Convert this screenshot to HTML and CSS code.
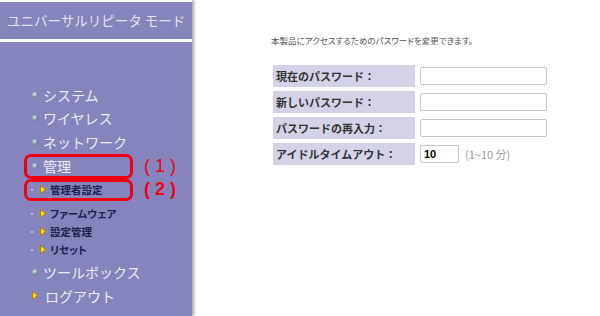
FILE: index.html
```html
<!doctype html>
<html lang="ja">
<head>
    <meta charset="UTF-8">
    <meta name="viewport" content="width=device-width, initial-scale=1.0">
    <title>管理者設定</title>
    <link rel="stylesheet" href="styles.css">
</head>
<body>
<div class="page">
    <aside class="sidebar">
        <div class="mode-title">ユニバーサルリピータ モード</div>
        <ul class="menu">
            <li class="menu-row main"><span class="item"><i class="dot"></i>システム</span></li>
            <li class="menu-row main"><span class="item"><i class="dot"></i>ワイヤレス</span></li>
            <li class="menu-row main"><span class="item"><i class="dot"></i>ネットワーク</span></li>
            <li class="menu-row main boxed"><span class="item marked"><i class="dot"></i>管理</span><span class="note">(1)</span></li>
            <li class="menu-row sub boxed"><span class="item marked"><i class="tiny"></i><svg class="arrow" viewBox="0 0 6 9"><polygon points="0.5,0.5 5.5,4.5 0.5,8.5" fill="#ffe400" stroke="#b07a00" stroke-width="1"/></svg>管理者設定</span><span class="note">(2)</span></li>
            <li class="menu-row sub first-sub"><span class="item"><i class="tiny"></i><svg class="arrow" viewBox="0 0 6 9"><polygon points="0.5,0.5 5.5,4.5 0.5,8.5" fill="#ffe400" stroke="#b07a00" stroke-width="1"/></svg>ファームウェア</span></li>
            <li class="menu-row sub"><span class="item"><i class="tiny"></i><svg class="arrow" viewBox="0 0 6 9"><polygon points="0.5,0.5 5.5,4.5 0.5,8.5" fill="#ffe400" stroke="#b07a00" stroke-width="1"/></svg>設定管理</span></li>
            <li class="menu-row sub"><span class="item"><i class="tiny"></i><svg class="arrow" viewBox="0 0 6 9"><polygon points="0.5,0.5 5.5,4.5 0.5,8.5" fill="#ffe400" stroke="#b07a00" stroke-width="1"/></svg>リセット</span></li>
            <li class="menu-row main tall after-sub"><span class="item"><i class="dot"></i>ツールボックス</span></li>
            <li class="menu-row main tall"><span class="item"><svg class="arrow logout" viewBox="0 0 6 9"><polygon points="0.5,0.5 5.5,4.5 0.5,8.5" fill="#ffe400" stroke="#b07a00" stroke-width="1"/></svg>ログアウト</span></li>
        </ul>
    </aside>
    <main class="content">
        <p class="intro">本製品にアクセスするためのパスワードを変更できます。</p>
        <div class="form-grid">
            <div class="label">現在のパスワード：</div>
            <div class="field"><input class="text-input" type="password"></div>
            <div class="label">新しいパスワード：</div>
            <div class="field"><input class="text-input" type="password"></div>
            <div class="label">パスワードの再入力：</div>
            <div class="field"><input class="text-input" type="password"></div>
            <div class="label">アイドルタイムアウト：</div>
            <div class="field">
                <input class="text-input short" type="text" value="10">
                <span class="hint">(1~10 分)</span>
            </div>
        </div>
    </main>
</div>
</body>
</html>
```

FILE: styles.css
```css
body {
    margin: 0;
    font-family: "Noto Sans CJK JP", "Noto Sans", sans-serif;
    background: #fff;
}
.page {
    display: flex;
    height: 316px;
    overflow: hidden;
}
.sidebar {
    width: 192px;
    flex-shrink: 0;
    display: flex;
    flex-direction: column;
    box-shadow: 2px 0 3px rgba(0, 0, 0, 0.35);
}
.mode-title {
    margin-top: 2px;
    height: 37px;
    line-height: 37px;
    padding-left: 7px;
    background: #8584bd;
    color: #e2e2ee;
    font-size: 13.5px;
    white-space: nowrap;
    overflow: hidden;
}
.menu {
    flex: 1;
    margin: 3px 0 0;
    padding: 41px 0 0 24px;
    list-style: none;
    background: #8584bd;
}
.menu-row {
    display: flex;
    align-items: center;
}
.item {
    box-sizing: border-box;
    width: 109px;
    height: 100%;
    display: flex;
    align-items: center;
    border: 3px solid transparent;
    border-radius: 7px;
    white-space: nowrap;
}
.item.marked {
    border-color: #f00010;
}
.main {
    height: 23.5px;
    font-size: 14px;
    color: #ececf6;
}
.main .item {
    padding-left: 5px;
}
.main.boxed {
    height: 25px;
}
.main.tall {
    height: 24px;
}
.after-sub {
    margin-top: 1px;
}
.sub {
    height: 18px;
    font-size: 10.5px;
    font-weight: bold;
    color: #1e2050;
    font-feature-settings: "palt";
}
.sub.boxed {
    height: 22px;
}
.first-sub {
    margin-top: 4px;
}
.sub .item {
    padding-left: 4px;
}
.dot {
    flex-shrink: 0;
    width: 6px;
    height: 6px;
    border-radius: 50%;
    margin-right: 5px;
    background: radial-gradient(circle at 40% 35%, #dce6ec, #7d95a4 55%, #45596a);
}
.tiny {
    flex-shrink: 0;
    width: 2px;
    height: 2px;
    border-radius: 50%;
    background: #c8c8e6;
    margin-right: 7px;
}
.arrow {
    flex-shrink: 0;
    width: 6px;
    height: 9px;
    margin-right: 4px;
}
.arrow.logout {
    margin-right: 7px;
}
.note {
    margin-left: 11px;
    color: #f00010;
    font-family: "Liberation Sans", sans-serif;
    font-size: 18px;
    letter-spacing: 5px;
}
.content {
    padding: 33px 0 0 79px;
}
.intro {
    margin: 0;
    font-size: 8.5px;
    line-height: 14px;
    color: #555;
    font-feature-settings: "palt";
}
.form-grid {
    margin: 18px 0 0 2px;
    display: grid;
    grid-template-columns: 142px auto;
    grid-auto-rows: 22px;
    row-gap: 4px;
    column-gap: 5px;
}
.label {
    background: #d4d2e7;
    padding-left: 3px;
    font-size: 11px;
    font-weight: bold;
    line-height: 22px;
    color: #333;
    white-space: nowrap;
}
.field {
    display: flex;
    align-items: center;
}
.text-input {
    box-sizing: border-box;
    width: 127px;
    height: 18px;
    border: 1px solid #c8c8c8;
    border-radius: 2px;
    padding: 0 3px;
    font-family: "Liberation Sans", sans-serif;
    font-size: 11px;
    font-weight: bold;
    color: #000;
}
.text-input.short {
    width: 39px;
}
.hint {
    margin-left: 6px;
    font-size: 11px;
    color: #999;
}
```
